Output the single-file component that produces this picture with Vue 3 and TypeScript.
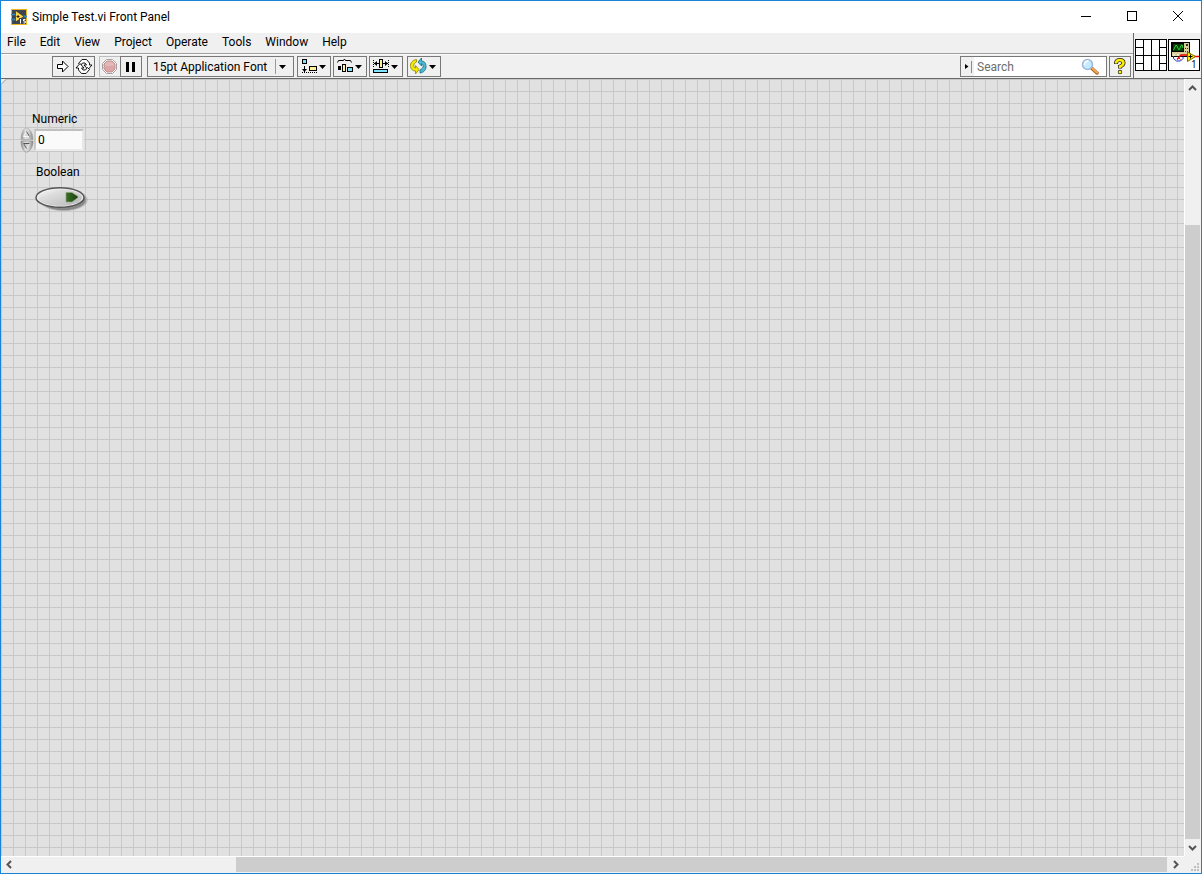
<script setup lang="ts">
import { ref } from 'vue'

const menus: string[] = ['File', 'Edit', 'View', 'Project', 'Operate', 'Tools', 'Window', 'Help']
const fontName = ref('15pt Application Font')
const query = ref('')
const numeric = ref('0')
const pressed = ref(false)
</script>

<template>
  <div class="window">
    <header class="titlebar">
      <svg class="app-icon" width="16" height="16" viewBox="0 0 16 16" aria-hidden="true">
        <rect width="16" height="16" fill="#f2b41c" />
        <rect x="1" y="1" width="14" height="14" fill="#3c4650" />
        <path d="M0 5.500h5M0 10.500h5" stroke="#2f86c0" stroke-width="1.500" />
        <path d="M11 7.500h5" stroke="#2f86c0" stroke-width="2" />
        <path d="M4.500 1.500L13 7.500L4.500 13z" fill="#ffd54a" stroke="#1d2226" stroke-width=".6" />
        <path d="M5.500 7.500h3M7 6v3" stroke="#222" />
        <path d="M8 9h7v6H8z" fill="#3c4650" />
        <path d="M9.500 10v4.500M14.500 10.500h-2v1.500h1.500q1 1 0 2h-1.500" fill="none" stroke="#fff" />
      </svg>
      <h1 class="title">Simple Test.vi Front Panel</h1>
      <div class="caption-buttons">
        <button type="button" aria-label="Minimize">
          <svg width="12" height="12" viewBox="0 0 12 12"><path d="M1 6.500h10" stroke="#000" /></svg>
        </button>
        <button type="button" aria-label="Maximize">
          <svg width="12" height="12" viewBox="0 0 12 12"><rect x="1.500" y="1.500" width="9" height="9" fill="none" stroke="#000" /></svg>
        </button>
        <button type="button" aria-label="Close">
          <svg width="12" height="12" viewBox="0 0 12 12"><path d="M1 1l10 10M11 1L1 11" stroke="#000" /></svg>
        </button>
      </div>
    </header>

    <div class="header">
      <div class="bars">
        <nav class="menu">
          <button v-for="m in menus" :key="m" type="button">{{ m }}</button>
        </nav>
        <div class="toolbar">
          <div class="group run">
            <button type="button" class="tool" aria-label="Run">
              <svg width="20" height="19" viewBox="0 0 20 19"><path d="M4.500 7.500h5v-3.500l5.500 5.500l-5.500 5.500v-3.500h-5z" fill="#fff" stroke="#000" /></svg>
            </button>
            <button type="button" class="tool" aria-label="Run Continuously">
              <svg width="20" height="19" viewBox="0 0 20 19" fill="#fff" stroke="#000" stroke-width=".9">
                <path d="M4.500 6.500L8 2.500h4.500L15.500 6V8h2.500l-4 4.500L10 8h2.500L11 6H8.500L6.500 8.500z" />
                <path d="M15.500 12.500L12 16.500H7.500L4.500 13V11H2l4-4.500L10 11H7.500L9 13h2.500l2-2.500z" />
              </svg>
            </button>
          </div>
          <div class="group stop">
            <button type="button" class="tool faded" aria-label="Abort Execution" disabled>
              <svg width="20" height="19" viewBox="0 0 20 19">
                <path d="M6.500 2.500h6l4 4v6l-4 4h-6l-4-4v-6z" fill="#fff" stroke="#a2a2a2" />
                <path d="M7 4h5l3 3v5l-3 3h-5l-3-3v-5z" fill="#dba6a6" stroke="#c69090" />
                <path d="M7 5h5l2 2v2H5V7z" fill="#e3b8b8" />
              </svg>
            </button>
            <button type="button" class="tool" aria-label="Pause">
              <svg width="20" height="19" viewBox="0 0 20 19"><path d="M5 5h3v10h-3zM11 5h3v10h-3z" fill="#000" /></svg>
            </button>
          </div>
          <div class="font-box">
            <select v-model="fontName" aria-label="Text Settings">
              <option>15pt Application Font</option>
            </select>
            <svg class="font-arrow" width="18" height="19" viewBox="0 0 18 19" aria-hidden="true">
              <path d="M0.500 2v15" stroke="#9a9a9a" /><path d="M4 8h7l-3.500 4z" fill="#000" />
            </svg>
          </div>
          <div class="arrange">
            <button type="button" class="tool wide" aria-label="Align Objects" aria-haspopup="menu">
              <svg width="32" height="19" viewBox="0 0 32 19">
                <rect x="4.500" y="2.500" width="4" height="4" fill="#7fe3ff" stroke="#000" />
                <path d="M6.500 9v6" stroke="#000" /><path d="M4 12h5l-2.500 3z" fill="#000" />
                <path d="M4 15.500h15" stroke="#000" stroke-dasharray="1 1" />
                <rect x="11.500" y="9.500" width="7" height="4" fill="#ffef9c" stroke="#000" />
                <path d="M21 8h7l-3.500 4z" fill="#000" />
              </svg>
            </button>
            <button type="button" class="tool wide" aria-label="Distribute Objects" aria-haspopup="menu">
              <svg width="32" height="19" viewBox="0 0 32 19">
                <path d="M3.500 5.500l1-2h5l1-1.500l1 1.500h5l1 2" fill="none" stroke="#000" />
                <path d="M4 9h3v4h-3z" fill="#000" />
                <rect x="8.500" y="7.500" width="3" height="7" fill="#ffef9c" stroke="#000" />
                <rect x="13.500" y="10.500" width="5" height="4" fill="#7fe3ff" stroke="#000" />
                <path d="M21 8h7l-3.500 4z" fill="#000" />
              </svg>
            </button>
            <button type="button" class="tool wide" aria-label="Resize Objects" aria-haspopup="menu">
              <svg width="32" height="19" viewBox="0 0 32 19">
                <path d="M3.500 3v8M18.500 3v8" stroke="#000" stroke-dasharray="1 1" />
                <path d="M4 6.500h14" stroke="#000" />
                <path d="M4 6.500l3-2.500v5zM18 6.500l-3-2.500v5z" fill="#000" />
                <rect x="9.500" y="2.500" width="3" height="8" fill="#ffef9c" stroke="#000" />
                <rect x="3.500" y="12.500" width="14" height="3" fill="#7fe3ff" stroke="#000" />
                <path d="M21 8h7l-3.500 4z" fill="#000" />
              </svg>
            </button>
          </div>
          <button type="button" class="tool wide reorder" aria-label="Reorder" aria-haspopup="menu">
            <svg width="32" height="19" viewBox="0 0 32 19">
              <path d="M8.500 2.500C4.500 3 2 6 2.500 9.500C3 12.500 5 14 7.500 14v3l3.500-4.500l-3.500-4v2.500C5 10.500 5 6.500 8.500 5z" fill="#f4e800" stroke="#8d8500" stroke-width=".8" />
              <path d="M12 16C16 15.500 18.500 12.500 18 8.500C17.500 5.500 16 4 13.500 4V1L10 5l3.500 4V6.500C16 7.500 15.500 11.500 12 13z" fill="#4db9d3" stroke="#176a83" stroke-width=".8" />
              <path d="M21 8h7l-3.500 4z" fill="#000" />
            </svg>
          </button>
          <div class="search">
            <svg width="13" height="19" viewBox="0 0 13 19" aria-hidden="true">
              <rect width="13" height="19" fill="#f0f0f0" />
              <path d="M4 7v5l3.500-2.500z" fill="#000" /><path d="M10.500 4v12" stroke="#8a8a8a" />
            </svg>
            <input v-model="query" type="text" placeholder="Search" aria-label="Search" />
            <button type="button" class="lens" aria-label="Find">
              <svg width="18" height="18" viewBox="0 0 18 18">
                <path d="M11 10.500l5 4.500" stroke="#b55f24" stroke-width="3.500" stroke-linecap="round" />
                <path d="M11.500 10.500l4.500 4" stroke="#f3ac55" stroke-width="2" stroke-linecap="round" />
                <circle cx="6.500" cy="6.500" r="5" fill="#c4ebff" stroke="#9db6dc" stroke-width="1.500" />
                <path d="M3.500 7c0-3 2-4 4-4" fill="none" stroke="#fff" stroke-width="1.500" />
              </svg>
            </button>
          </div>
          <button type="button" class="tool help" aria-label="Show Context Help">
            <svg width="20" height="19" viewBox="0 0 20 19">
              <path d="M6 7V5.500Q7 3 9.500 3Q13.500 3 13.500 6Q13.500 8 10 9.500V11.500" fill="none" stroke="#222" stroke-width="4" />
              <circle cx="10" cy="15" r="2.200" fill="#222" />
              <path d="M6 6.500V5.500Q7 3 9.500 3Q13.500 3 13.500 6Q13.500 8 10 9.500V11" fill="none" stroke="#ffed00" stroke-width="2.500" />
              <circle cx="10" cy="15" r="1.500" fill="#ffed00" />
            </svg>
          </button>
        </div>
      </div>
      <div class="vi-panel">
        <svg width="33" height="33" viewBox="0 0 33 33" role="img" aria-label="Connector pane">
          <rect x=".5" y=".5" width="31" height="31" fill="#fff" stroke="#000" />
          <path d="M8.500 0v32M16.500 0v32M24.500 0v32M0 16.500h32M0 8.500h8M0 24.500h8M24 8.500h8M24 24.500h8" stroke="#000" />
        </svg>
        <svg width="32" height="32" viewBox="0 0 32 32" role="img" aria-label="VI icon">
          <rect x=".5" y=".5" width="31" height="31" fill="#fff" stroke="#000" />
          <rect x="3.500" y="3.500" width="18" height="14" fill="#d6cf9c" stroke="#000" />
          <rect x="4.500" y="4.500" width="11" height="8" fill="#003c00" stroke="#000" />
          <path d="M5.500 11l1-2l1.500-3l1 1l1.500 3.500h1l1.500-4l1-.5l1 3" fill="none" stroke="#26d53a" />
          <path d="M18 5h2v2h-2zM17 9h1v1h-1zM19 9h1v1h-1zM17 12h1v1h-1zM19 12h1v1h-1z" fill="#333" />
          <path d="M5 15.500h2v1h-2zM9 15.500h2v1h-2z" fill="#fff" />
          <path d="M5.500 17v2.500l3 2.500h4l2.500-2.500V17.500" fill="none" stroke="#1a2cc4" />
          <path d="M9 20.500l4-4.500h7M26 17.500h5" fill="none" stroke="#e00" stroke-width="1.300" />
          <path d="M9.500 17.500l3 3" fill="none" stroke="#e00" />
          <path d="M19.500 13v9.500l8-5z" fill="#ffec00" stroke="#7a6a00" />
          <path d="M20.500 17.500h4M22.500 15.500v4" stroke="#000" />
          <text x="23" y="29" font-size="10" font-family="'Open Sans', sans-serif">1</text>
        </svg>
      </div>
    </div>

    <div class="body">
      <main class="canvas">
        <svg class="origin" width="6" height="6" viewBox="0 0 6 6" aria-hidden="true">
          <path d="M0 0h6L0 6z" fill="#ececec" /><path d="M0 5.500L5.500 0" stroke="#999" />
        </svg>
        <div class="node numeric">
          <label for="numeric">Numeric</label>
          <div class="numeric-row">
            <svg width="14" height="26" viewBox="0 0 14 26" aria-hidden="true">
              <defs>
                <linearGradient id="metal"><stop offset="0" stop-color="#8f8f8f" /><stop offset=".35" stop-color="#dedede" /><stop offset=".65" stop-color="#d2d2d2" /><stop offset="1" stop-color="#858585" /></linearGradient>
              </defs>
              <path d="M1 12.500C1 5 4 1 6.500 1S13 5 13 12.500z" fill="url(#metal)" stroke="#aaa" stroke-width=".7" />
              <path d="M1 14C1 21 4 25 6.500 25S13 21 13 14z" fill="url(#metal)" stroke="#8c8c8c" stroke-width=".7" />
              <path d="M3.500 9.500l3-5l3 5z" fill="#d8d8d8" stroke="#f8f8f8" /><path d="M6.500 4.500l3 5" stroke="#555" />
              <path d="M3.500 16.500h6l-3 5z" fill="#ccc" stroke="#f0f0f0" /><path d="M9.500 16.500h-6l3 5" fill="none" stroke="#555" />
            </svg>
            <input id="numeric" v-model="numeric" type="text" />
          </div>
        </div>
        <div class="node boolean">
          <label for="boolean">Boolean</label>
          <button id="boolean" type="button" :aria-pressed="pressed" @click="pressed = !pressed">
            <svg width="54" height="28" viewBox="0 0 54 28" aria-hidden="true">
              <defs>
                <linearGradient id="face" x1="0" y1="0" x2="1" y2="1"><stop offset="0" stop-color="#fff" /><stop offset=".3" stop-color="#dedede" /><stop offset=".7" stop-color="#c8c8c8" /><stop offset="1" stop-color="#b0b0b0" /></linearGradient>
                <radialGradient id="shade"><stop offset=".85" stop-color="#888" /><stop offset="1" stop-color="#999" stop-opacity="0" /></radialGradient>
                <linearGradient id="led"><stop offset="0" stop-color="#3a7024" /><stop offset="1" stop-color="#1b3f10" /></linearGradient>
              </defs>
              <ellipse cx="28.500" cy="16" rx="25" ry="11.500" fill="url(#shade)" />
              <ellipse cx="25" cy="13.500" rx="24" ry="9.800" fill="#eee" stroke="#555" stroke-width="1.500" />
              <ellipse cx="25" cy="13.500" rx="22" ry="8.300" fill="url(#face)" />
              <path d="M31 8.500h6l6 4v1l-6 4.500h-6z" fill="url(#led)" stroke="#8da282" stroke-width=".7" />
            </svg>
          </button>
        </div>
      </main>
      <div class="scroll vertical">
        <button type="button" aria-label="Scroll up">
          <svg width="9" height="8" viewBox="0 0 9 8"><path d="M1 6l3.500-3.500L8 6" fill="none" stroke="#555" stroke-width="2" /></svg>
        </button>
        <div class="track"><div class="before"></div><div class="thumb"></div></div>
        <button type="button" aria-label="Scroll down">
          <svg width="9" height="8" viewBox="0 0 9 8"><path d="M1 2l3.500 3.500L8 2" fill="none" stroke="#555" stroke-width="2" /></svg>
        </button>
      </div>
      <div class="scroll horizontal">
        <button type="button" aria-label="Scroll left">
          <svg width="8" height="9" viewBox="0 0 8 9"><path d="M5 1L1.500 4.500L5 8" fill="none" stroke="#555" stroke-width="2" /></svg>
        </button>
        <div class="track"><div class="before"></div><div class="thumb"></div></div>
        <button type="button" aria-label="Scroll right">
          <svg width="8" height="9" viewBox="0 0 8 9"><path d="M2 1l3.500 3.500L2 8" fill="none" stroke="#555" stroke-width="2" /></svg>
        </button>
      </div>
      <div class="corner">
        <svg width="10" height="10" viewBox="0 0 10 10" aria-hidden="true"><path d="M6 0h2v2h-2zM3 3h2v2h-2zM6 3h2v2h-2zM0 6h2v2h-2zM3 6h2v2h-2zM6 6h2v2h-2z" fill="#bfbfbf" /></svg>
      </div>
    </div>
  </div>
</template>

<style>
body { margin: 0; }
</style>

<style scoped>
.window, .window * { box-sizing: border-box; }
.window {
  display: flex; flex-direction: column; height: 100vh;
  border: 1px solid #1883d7; background: #f0f0f0; color: #000;
  font: 12px/16px Roboto, "Open Sans", sans-serif;
}
svg { display: block; flex: none; }
button, input, select { margin: 0; padding: 0; border: 0; background: none; font: inherit; color: inherit; border-radius: 0; outline: 0; }
.titlebar { display: flex; align-items: center; height: 32px; padding-left: 10px; background: #fff; flex: none; }
.title { margin: 0 0 0 5px; font: inherit; flex: 1; }
.caption-buttons { display: flex; height: 30px; align-self: flex-start; }
.caption-buttons button { width: 46px; display: grid; place-items: center; }

.header { display: flex; flex: none; height: 46px; border-bottom: 1px solid #696969; }
.bars { flex: 1; min-width: 0; display: flex; flex-direction: column; }
.menu { display: flex; gap: 14px; height: 21px; padding-left: 6px; border-bottom: 1px solid #a0a0a0; }
.menu button { height: 18px; }
.toolbar { display: flex; align-items: center; height: 24px; padding: 0 2px 0 51px; border-top: 1px solid #fafafa; }
.group { display: flex; }
.group .tool + .tool { margin-left: -1px; }
.stop { margin-left: 4px; }
.tool { width: 22px; height: 21px; border: 1px solid #787878; display: grid; place-items: center; flex: none; }
.tool.faded { border-color: #bdbdbd; }
.tool.wide { width: 34px; }
.font-box { display: flex; align-items: center; width: 147px; height: 21px; margin-left: 5px; border: 1px solid #787878; flex: none; }
.font-box select { appearance: none; flex: 1; min-width: 0; height: 19px; padding-left: 5px; }
.arrange { display: flex; gap: 2px; margin-left: 3px; }
.reorder { margin-left: 4px; }
.search { display: flex; align-items: center; width: 147px; height: 21px; margin-left: auto; border: 1px solid #787878; background: #fff; flex: none; }
.search input { flex: 1; min-width: 0; height: 19px; padding-left: 3px; }
.search input::placeholder { color: #6d6d6d; opacity: 1; }
.lens { margin-right: 7px; }
.help { margin-left: 2px; }
.vi-panel { display: flex; align-items: flex-start; padding: 6px 0 0 1px; width: 68px; border-left: 1px solid #696969; flex: none; }

.body { flex: 1; min-height: 0; display: grid; grid-template: minmax(0, 1fr) 17px / minmax(0, 1fr) 17px; }
.canvas {
  position: relative; overflow: hidden; background-color: #e1e1e1;
  background-image: linear-gradient(to right, #c8c8c8 1px, transparent 1px), linear-gradient(#c8c8c8 1px, transparent 1px);
  background-size: 12px 12px;
}
.origin { position: absolute; left: 0; top: 0; }
.node { position: absolute; display: flex; flex-direction: column; }
.numeric { left: 19px; top: 32px; }
.numeric label { padding-left: 12px; }
.numeric-row { display: flex; align-items: center; }
.numeric-row input { width: 50px; height: 22px; padding: 0 2px 1px; background: #fafafa; border: 2px solid; border-color: #c0c0c0 #e8e8e8 #ebebeb #c9c9c9; }
.boolean { left: 34px; top: 85px; }
.boolean label { padding-left: 1px; }
.boolean button { height: 28px; margin-top: 4px; }

.scroll { display: flex; background: #f0f0f0; }
.vertical { flex-direction: column; border-left: 1px solid #fff; padding-right: 1px; }
.horizontal { border-top: 1px solid #fff; padding-bottom: 1px; }
.scroll button { display: grid; place-items: center; width: 15px; height: 15px; flex: none; }
.vertical button { height: 17px; }
.horizontal button { width: 17px; }
.track { flex: 1; display: flex; min-width: 0; min-height: 0; }
.vertical .track { flex-direction: column; }
.thumb { background: #cdcdcd; }
.vertical .before { flex: 174; }
.vertical .thumb { flex: 826; }
.horizontal .before { flex: 19; }
.horizontal .thumb { flex: 81; }
.corner { display: flex; align-items: flex-end; justify-content: flex-end; }
</style>
